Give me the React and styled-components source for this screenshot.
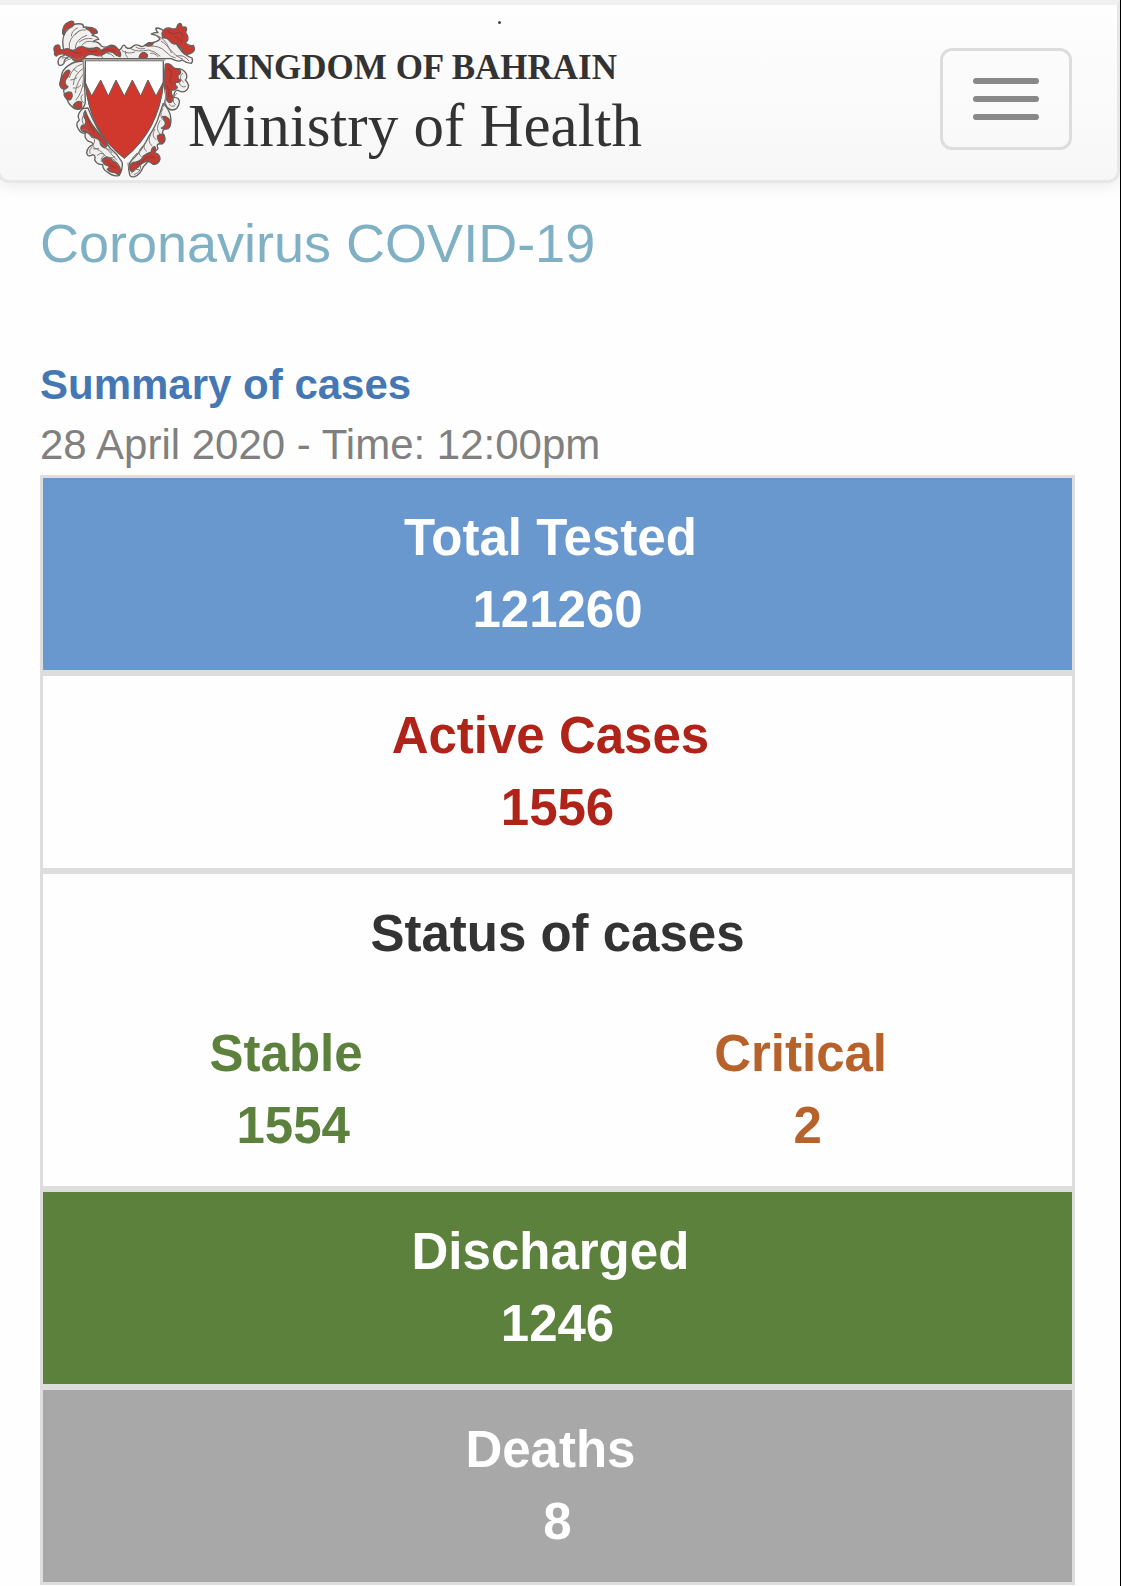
import React from 'react';
import styled, { createGlobalStyle } from 'styled-components';

const GlobalStyle = createGlobalStyle`
  * {
    box-sizing: border-box;
  }

  body {
    margin: 0;
    background: #fefefe;
    font-family: "Liberation Sans", Arial, sans-serif;
  }

  h1, h2, h3, p {
    margin: 0;
  }
`;

const Page = styled.div`
  min-height: 100vh;
  border-right: 1px solid #000;
  overflow: hidden;
`;

/* navbar */
const Navbar = styled.header`
  display: flex;
  align-items: flex-start;
  justify-content: space-between;
  margin: 0 0 0 -3px;
  padding: 15px 45px 2px 52px;
  border: 3px solid #e7e7e7;
  border-top: 5px solid #f0f0f0;
  border-radius: 0 0 12px 12px;
  background: linear-gradient(#fefefe, #f7f7f7);
  box-shadow: 0 3px 15px rgba(0, 0, 0, 0.08);
`;

const Brand = styled.a`
  position: relative;
  display: flex;
  color: #333;
  text-decoration: none;
  font-family: "Liberation Serif", "Times New Roman", serif;

  /* speck above the wordmark */
  &::after {
    content: "";
    position: absolute;
    left: 446px;
    top: 1px;
    width: 3px;
    height: 3px;
    border-radius: 50%;
    background: #444;
  }
`;

const BrandText = styled.span`
  display: flex;
  flex-direction: column;
  gap: 4px;
  margin-left: -10px;
  padding-top: 24px;
  white-space: nowrap;
`;

const Country = styled.span`
  padding-left: 20px;
  font-size: 35px;
  font-weight: bold;
  line-height: 48px;
`;

const Ministry = styled.span`
  font-size: 61px;
  line-height: 60px;
`;

const Toggle = styled.button`
  display: flex;
  flex-direction: column;
  gap: 12px;
  margin-top: 28px;
  padding: 27px 30px;
  border: 3px solid #ddd;
  border-radius: 12px;
  background: transparent;
  cursor: pointer;
`;

const IconBar = styled.span`
  width: 66px;
  height: 6px;
  border-radius: 3px;
  background: #888;
`;

/* content */
const Content = styled.main`
  padding: 30px 45px 0 40px;
`;

const Title = styled.h1`
  margin-bottom: 82px;
  color: #80b0c4;
  font-size: 54px;
  font-weight: normal;
  line-height: 60px;
`;

const Subtitle = styled.h2`
  color: #4577b4;
  font-size: 42px;
  line-height: 60px;
`;

const DateLine = styled.p`
  color: #808080;
  font-size: 42px;
  line-height: 60px;
`;

const Panel = styled.section`
  padding: 24px 0;
  border: 3px solid #ddd;
  background: ${({ $bg }) => $bg || '#fefefe'};
  color: ${({ $color }) => $color || '#fff'};
  font-size: 51px;
  font-weight: bold;
  line-height: 72px;
  text-align: center;
`;

const Label = styled.h3`
  font-size: inherit;
`;

const StatusRow = styled.div`
  display: grid;
  grid-template-columns: 1fr 1fr;
  margin-top: 48px;
`;

const Status = styled.div`
  color: ${({ $color }) => $color};
`;

const Emblem = () => (
  <svg width="146" height="158" viewBox="156 60 438 474" aria-hidden="true">
    <g stroke="#66605d" strokeWidth="4" strokeLinejoin="round" strokeLinecap="round">
      {/* white mantling */}
      <g fill="#f1f0ef">
        <path d="M190 144Q182 104 208 84Q222 68 244 72Q252 74 250 82Q266 78 274 90Q286 88 292 98Q284 100 276 106Q292 108 296 118Q288 118 280 124Q298 126 304 138Q318 146 330 136Q346 134 352 148Q362 152 366 140Q372 130 378 142Q390 150 400 138Q410 130 424 140Q438 138 446 128Q462 132 480 118Q476 106 454 102Q464 96 474 98Q466 90 468 84Q486 84 500 100Q524 122 536 142Q550 164 576 174Q580 184 574 190Q560 190 546 180Q534 188 514 176H234Q218 174 206 170Q192 176 192 190Q184 200 176 194Q170 180 182 170Q200 166 194 156Z" />
        <path d="M250 184Q226 182 206 196Q186 208 184 230Q176 252 194 262Q186 278 200 290Q202 308 214 318Q226 332 244 326Q256 322 256 300Z" />
        <path d="M528 206Q548 204 558 220Q564 232 556 240Q572 256 562 268Q550 282 532 270Q520 276 522 292Q540 292 538 308Q534 330 516 330Q500 328 494 306Z" />
        <path d="M248 326Q228 344 238 360Q224 372 236 388Q242 400 256 400Q252 416 266 424Q280 428 280 434Q262 440 260 458Q262 474 278 464Q288 466 284 480Q290 494 308 494Q308 508 322 516Q340 532 358 526Q370 506 366 486Q352 462 330 444Q290 390 264 324Z" />
        <path d="M490 310Q512 334 512 354Q516 384 494 386Q482 396 492 406Q500 424 486 432Q466 428 474 446Q464 458 456 460Q448 484 430 500Q420 524 404 530Q388 534 388 518Q382 498 392 484Q426 452 446 410Q470 374 476 350Z" />
      </g>
      {/* red mantling */}
      <g fill="#c63a31">
        <path d="M188 102Q186 74 206 66Q222 60 222 70Q218 84 204 84Q194 88 192 104Z" />
        <path d="M258 86Q270 78 282 86Q292 90 292 98Q284 102 276 100Q270 90 258 86Z" />
        <path d="M164 156Q158 142 168 136Q178 132 180 142Q178 150 190 150Q204 142 212 150Q224 154 232 144Q244 136 258 144Q276 148 290 142Q300 144 302 152Q316 142 330 140Q348 136 356 150Q366 162 360 170Q350 168 340 158Q326 152 314 160Q300 170 288 166Q266 158 256 170Q244 188 226 184Q216 178 214 168Q200 168 190 162Q174 160 170 168Q162 168 164 156Z" />
        <path d="M486 100Q492 82 510 84Q522 90 530 84Q532 72 540 70Q546 72 546 82Q560 78 560 88Q554 98 562 106Q568 120 556 128Q566 140 580 136Q588 152 576 158Q560 168 550 158Q544 156 546 146Q534 142 532 130Q520 136 510 124Q502 112 488 114Z" />
        <path d="M418 170Q422 156 434 158Q444 162 442 170Q434 178 418 174Z" />
        <path d="M434 136Q444 126 460 128Q458 138 444 138Z" />
        <path d="M496 192Q506 188 514 196Q524 208 538 208Q548 218 534 226Q532 238 542 240Q540 250 526 246Q524 256 532 262Q526 272 514 270Q512 282 520 292Q518 308 508 308Q496 300 498 286Q492 262 492 240Z" />
        <path d="M194 218Q204 206 210 214Q206 230 196 240Q192 254 204 260Q196 272 184 264Q174 252 184 238Q186 228 194 218Z" />
        <path d="M192 284Q204 272 214 278Q220 288 212 298Q200 304 192 284Z" />
        <path d="M220 316Q232 300 244 306Q248 322 240 326Q226 328 220 316Z" />
        <path d="M256 332Q264 358 284 384Q300 406 318 424Q326 438 314 444Q300 438 300 424Q292 412 276 412Q268 396 252 396Q236 388 246 376Q262 376 256 358Q246 346 256 332Z" />
        <path d="M488 350Q500 346 510 362Q514 380 504 386Q488 390 484 384Q498 378 496 368Z" />
        <path d="M472 408Q484 398 492 406Q498 420 486 430Q474 430 472 408Z" />
        <path d="M308 478Q318 468 332 474Q336 486 350 488Q362 500 362 518Q354 528 346 518Q330 518 322 508Q334 500 320 496Q306 490 308 478Z" />
        <path d="M388 504Q390 486 408 486Q426 482 430 468Q444 458 454 456Q454 442 464 440Q470 450 464 458Q480 462 480 478Q474 496 458 492Q450 482 438 484Q424 488 416 500Q406 506 400 514Q392 516 388 504Z" />
      </g>
      {/* feather folds */}
      <g fill="none" strokeWidth="3" stroke="#827c79">
        <path d="M208 146Q202 116 238 92M226 144Q226 118 260 106M246 136Q256 118 282 126M214 108Q214 92 232 84M226 104Q238 86 256 90M238 126Q254 112 276 116M464 104Q494 112 508 146Q524 168 548 178M448 138Q480 136 498 156Q510 170 526 174M484 124Q506 136 514 158M392 146Q412 158 446 150Q466 154 480 168M366 152Q384 164 404 156M322 160Q334 160 342 170M296 166Q304 166 310 174M382 172Q374 164 376 154M408 142Q420 150 434 146M452 160Q466 158 474 170" />
        <path d="M246 192Q216 202 208 232M248 206Q222 224 220 254M250 222Q230 246 226 278M250 242Q248 276 228 300M220 208Q228 210 232 216M212 240Q222 240 230 234M220 264Q234 266 242 256M248 284Q236 294 250 308" />
        <path d="M548 220Q532 234 550 246M538 250Q544 264 556 260M530 280Q510 300 526 314M494 268Q502 296 490 320M508 314Q514 322 524 318" />
        <path d="M254 340Q238 362 254 376M248 388Q258 386 266 396M270 406Q294 416 278 436Q282 448 296 446M280 446Q300 446 316 468Q330 478 344 470M292 466Q304 454 314 466Q302 472 304 484M302 428Q326 452 350 480M318 446Q330 446 336 458M334 474Q346 478 354 496M276 442Q266 448 270 460" />
        <path d="M488 326Q474 352 494 364M480 362Q464 388 480 402M464 388Q452 410 468 418M452 404Q440 424 456 438M438 424Q424 444 440 454M426 440Q408 460 424 470M410 460Q394 474 394 484M394 520Q408 500 420 512M402 524Q424 516 422 498M384 488Q382 498 388 506" />
        <path d="M186 174Q196 170 204 176M192 188Q210 170 230 178Q242 178 248 170M530 168Q552 162 566 182" />
      </g>
      {/* dark creases in the red */}
      <g fill="none" strokeWidth="3" stroke="#8c3a34">
        <path d="M212 150Q224 164 244 158M262 148Q270 160 290 152M306 154Q324 144 344 154M502 92Q514 106 532 98Q546 92 548 110M524 112Q540 112 546 128M504 206Q520 216 512 232Q504 246 518 252M502 258Q510 276 506 290M262 350Q266 372 284 396M318 482Q332 500 350 504M408 492Q420 494 436 476Q450 466 466 474" />
      </g>
      {/* shield */}
      <path fill="#fff" d="M256 182H490V250Q476 390 373 474Q272 398 256 250Z" />
      <path fill="#d0382e" strokeWidth="3" d="M257 250L275 288L302 240L325 288L348 240L373 288L397 240L422 288L444 240L468 288L490 246Q478 388 373 474Q268 396 257 250Z" />
      <path fill="none" stroke="#999" strokeWidth="5" d="M250 180H494" />
      <path fill="none" stroke="#999" strokeWidth="3" d="M250 184V260M496 270V310" />
    </g>
  </svg>
);

const Stat = ({ label, value }) => (
  <>
    <Label>{label}&nbsp;</Label>
    <p>{value}</p>
  </>
);

const App = () => {
  return (
    <Page>
      <GlobalStyle />
      <Navbar>
        <Brand href="#">
          <Emblem />
          <BrandText>
            <Country>KINGDOM OF BAHRAIN</Country>
            <Ministry>Ministry of Health</Ministry>
          </BrandText>
        </Brand>
        <Toggle type="button" aria-label="Toggle navigation">
          <IconBar />
          <IconBar />
          <IconBar />
        </Toggle>
      </Navbar>

      <Content>
        <Title>Coronavirus COVID-19</Title>
        <Subtitle>Summary of cases</Subtitle>
        <DateLine>28 April 2020 - Time: 12:00pm</DateLine>

        <Panel $bg="#6998cf">
          <Stat label="Total Tested" value="121260" />
        </Panel>
        <Panel $color="#b02318">
          <Stat label="Active Cases" value="1556" />
        </Panel>
        <Panel $color="#333">
          <Label>Status of cases</Label>
          <StatusRow>
            <Status $color="#5c813d">
              <Stat label={'Stable\u00a0'} value={'1554\u00a0'} />
            </Status>
            <Status $color="#b8622b">
              <Stat label={'Critical\u00a0'} value={'2\u00a0'} />
            </Status>
          </StatusRow>
        </Panel>
        <Panel $bg="#5c813d">
          <Stat label="Discharged" value="1246" />
        </Panel>
        <Panel $bg="#a8a8a8">
          <Stat label="Deaths" value="8" />
        </Panel>
      </Content>
    </Page>
  );
};

export default App;
